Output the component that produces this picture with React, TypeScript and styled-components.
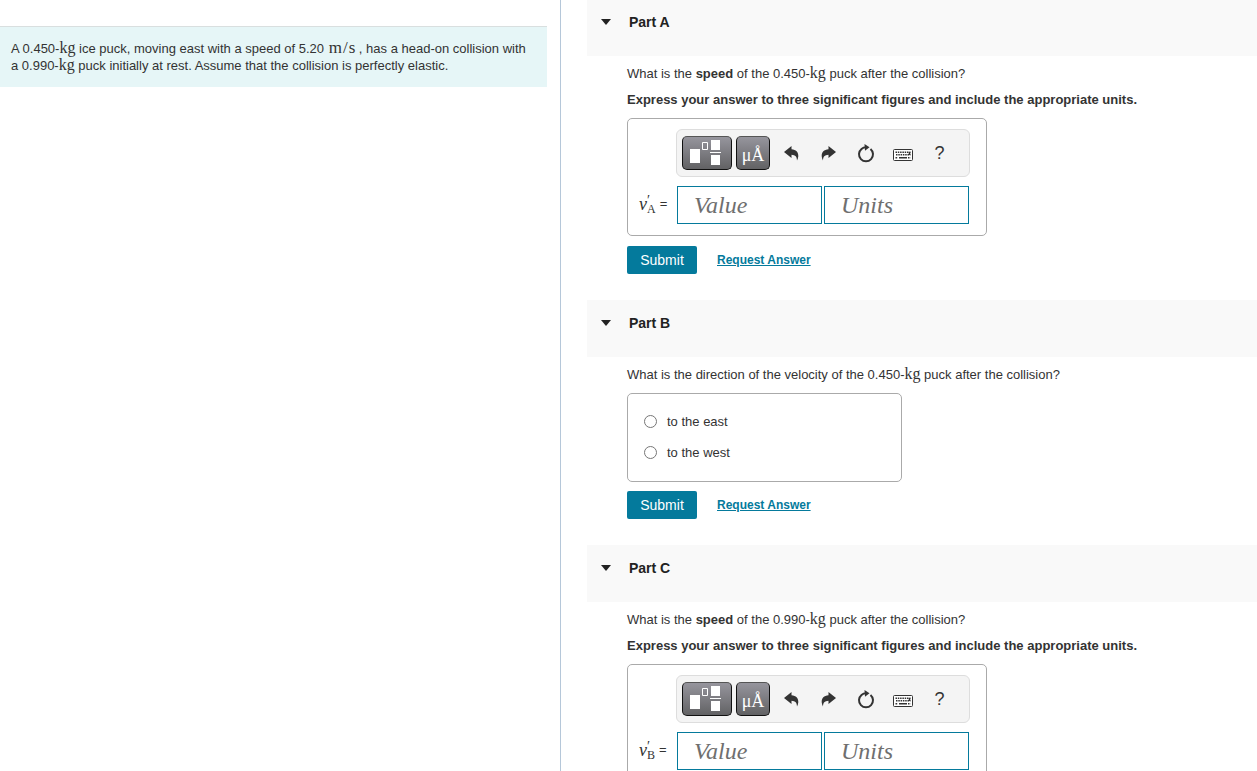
import React, { useState } from "react";
import styled, { createGlobalStyle } from "styled-components";

const sans = `"Liberation Sans", Arial, Helvetica, sans-serif`;
const serif = `"Liberation Serif", "Times New Roman", serif`;
const teal = "#047a9c";

const GlobalStyle = createGlobalStyle`
  *, *::before, *::after { box-sizing: border-box; }
  body { margin: 0; background: #fff; color: #333; font: 13px/16px ${sans}; }
  button, input { font-family: inherit; }
`;

const Page = styled.div`
  display: grid;
  grid-template-columns: 561fr 696fr;
  height: 100vh;
`;

const Pane = styled.div`
  min-width: 0;
  overflow-y: auto;
  scrollbar-width: none;
`;

const ProblemPane = styled(Pane)`
  padding: 26px 13px 0 0;
  border-right: 1px solid #b5c7d9;
`;

const PartsPane = styled(Pane)`
  padding-left: 26px;
`;

const Problem = styled.p`
  margin: 0;
  padding: 13px 11px;
  border-top: 1px solid #d9dfdf;
  background: #e6f6f7;
  line-height: 17px;
`;

const UnitText = styled.span`
  font: 16px/14px ${serif};
`;

const SpeedUnit = styled(UnitText)`
  margin-left: 1px;
  font-size: 17px;
`;

const Slash = styled.span`
  margin: 0 1px;
`;

const PartList = styled.main`
  margin-top: -1px;
`;

const PartHeader = styled.h2`
  display: flex;
  height: 57px;
  margin: 0;
  background: #f9f9f9;
`;

const PartToggle = styled.button`
  display: flex;
  align-items: center;
  gap: 18px;
  height: 46px;
  padding: 0 14px;
  border: 0;
  background: none;
  color: #222;
  font-size: 14px;
  font-weight: bold;
  cursor: pointer;
`;

const Caret = styled.span<{ $open: boolean }>`
  border: 5px solid transparent;
  border-top: 6px solid #222;
  border-bottom: 0;
  transform: ${(p) => (p.$open ? "none" : "rotate(-90deg)")};
`;

const PartBody = styled.div`
  padding: 10px 40px 26px;
`;

const Question = styled.p`
  margin: 0;
`;

const Instruction = styled.p`
  margin: 10px 0 0;
  font-weight: bold;
`;

const AnswerBox = styled.div`
  width: 360px;
  max-width: 100%;
  margin: 10px 0;
  padding: 10px 16px 11px 11px;
  border: 1px solid #aaa;
  border-radius: 5px;
`;

const Toolbar = styled.div`
  display: flex;
  align-items: center;
  height: 48px;
  margin-left: 37px;
  padding-left: 5px;
  border: 1px solid #ddd;
  border-radius: 6px;
  background: #f4f4f4;
`;

const DarkButtons = styled.div`
  display: flex;
  gap: 4px;
  margin-right: 3px;
`;

const DarkButton = styled.button<{ $wide?: boolean }>`
  display: grid;
  place-items: center;
  width: ${(p) => (p.$wide ? 50 : 34)}px;
  height: 34px;
  padding: 0;
  border: 1px solid #111;
  border-top-color: #555;
  border-radius: 5px;
  background: linear-gradient(#96959d, #626264);
  color: #fff;
`;

const UnitsLabel = styled.span`
  padding-top: 4px;
  font: 18px/20px ${serif};
`;

const ToolButton = styled.button`
  display: grid;
  place-items: center;
  width: 37px;
  height: 34px;
  padding: 0;
  border: 0;
  background: none;
  color: #333;
  font-size: 18px;
`;

const Fields = styled.div`
  display: flex;
  align-items: center;
  gap: 2px;
  margin: 9px 1px 0 0;
`;

const Variable = styled.label`
  display: flex;
  align-items: center;
  width: 36px;
  padding-bottom: 2px;
  font: 14px/16px ${serif};
`;

const VarName = styled.i`
  font-size: 18px;
`;

const Marks = styled.span`
  display: flex;
  flex-direction: column;
  padding-top: 2px;
  margin-right: 4px;
  font-size: 12px;
  line-height: 9px;
`;

const Prime = styled.span`
  font-size: 14px;
`;

const Equals = styled.span`
  font-family: ${sans};
  font-size: 13px;
`;

const Field = styled.input`
  flex: 1;
  min-width: 0;
  height: 38px;
  padding: 0 16px;
  border: 1px solid ${teal};
  border-radius: 0;
  background: #fff;
  font: italic 24px ${serif};
  &::placeholder { color: #6f6f6f; opacity: 1; }
`;

const Choices = styled.fieldset`
  display: flex;
  flex-direction: column;
  gap: 15px;
  width: 275px;
  max-width: 100%;
  margin: 10px 0 9px;
  padding: 20px 16px;
  border: 1px solid #aaa;
  border-radius: 5px;
`;

const Choice = styled.label`
  display: flex;
  align-items: center;
  gap: 10px;
`;

const Radio = styled.input`
  width: 13px;
  height: 13px;
  margin: 0 0 2px;
`;

const Actions = styled.div`
  display: flex;
  align-items: center;
  gap: 20px;
`;

const Submit = styled.button`
  width: 70px;
  height: 28px;
  padding: 0;
  border: 0;
  border-radius: 2px;
  background: ${teal};
  color: #fff;
  font-size: 14px;
`;

const RequestLink = styled.a`
  color: ${teal};
  font-size: 12px;
  font-weight: bold;
`;

const TemplateIcon = () => (
  <svg width="34" height="28" viewBox="0 0 34 28" aria-hidden="true">
    <path fill="#fff" d="M0 10h10v14H0zM21 1h9v10h-9zM21 16h9v10h-9zM20 13h11v1H20z" />
    <path fill="none" stroke="#fff" d="M12.500 3.500h5v7h-5z" />
  </svg>
);

const ArrowShape = () => (
  <path
    fill="currentColor"
    d="M0 6 7.500 0v3.200c4.500.3 7 3 6.800 7-.1 1.500-.6 3-1.300 4.300-.1-3.700-1.500-5.500-5.500-5.700V12z"
  />
);

const UndoIcon = () => (
  <svg width="15" height="15" viewBox="0 0 15 15" aria-hidden="true">
    <ArrowShape />
  </svg>
);

const RedoIcon = () => (
  <svg width="15" height="15" viewBox="0 0 15 15" aria-hidden="true">
    <g transform="matrix(-1 0 0 1 15 0)">
      <ArrowShape />
    </g>
  </svg>
);

const ResetIcon = () => (
  <svg width="18" height="20" viewBox="0 0 18 20" aria-hidden="true">
    <path
      fill="none"
      stroke="currentColor"
      strokeWidth="2"
      d="M13.500 5.900A7 7 0 1 1 4.500 5.900Q6.500 4.200 9 4.200"
    />
    <path fill="currentColor" d="M7.500 1 12.500 4.300 8 7.800z" />
  </svg>
);

const KeyboardIcon = () => (
  <svg width="20" height="16" viewBox="0 0 20 16" aria-hidden="true">
    <rect x=".5" y="4.500" width="19" height="11" rx="1" fill="#fff" stroke="currentColor" />
    <path
      stroke="currentColor"
      strokeWidth="1.500"
      strokeDasharray="1.500 .8"
      d="M2.500 7.200h15M3 9.700h14.500M2.500 12.700h2.500M15 12.700h2.500"
    />
    <path stroke="currentColor" strokeWidth="1.500" d="M6 12.700h8M16.500 7v3" />
  </svg>
);

const Kg = () => <UnitText>kg</UnitText>;

function Part({ title, children }: { title: string; children: React.ReactNode }) {
  const [open, setOpen] = useState(true);
  return (
    <section>
      <PartHeader>
        <PartToggle type="button" aria-expanded={open} onClick={() => setOpen(!open)}>
          <Caret $open={open} />
          {title}
        </PartToggle>
      </PartHeader>
      {open && <PartBody>{children}</PartBody>}
    </section>
  );
}

function ValueAnswer({ id, subscript }: { id: string; subscript: string }) {
  return (
    <AnswerBox>
      <Toolbar role="toolbar" aria-label="Math tools">
        <DarkButtons>
          <DarkButton $wide type="button" aria-label="Templates">
            <TemplateIcon />
          </DarkButton>
          <DarkButton type="button">
            <UnitsLabel>μÅ</UnitsLabel>
          </DarkButton>
        </DarkButtons>
        <ToolButton type="button" aria-label="Undo"><UndoIcon /></ToolButton>
        <ToolButton type="button" aria-label="Redo"><RedoIcon /></ToolButton>
        <ToolButton type="button" aria-label="Reset"><ResetIcon /></ToolButton>
        <ToolButton type="button" aria-label="Keyboard"><KeyboardIcon /></ToolButton>
        <ToolButton type="button">?</ToolButton>
      </Toolbar>
      <Fields>
        <Variable htmlFor={id}>
          <VarName>v</VarName>
          <Marks>
            <Prime>′</Prime>
            <span>{subscript}</span>
          </Marks>
          <Equals>=</Equals>
        </Variable>
        <Field id={id} placeholder="Value" />
        <Field aria-label="Units" placeholder="Units" />
      </Fields>
    </AnswerBox>
  );
}

const AnswerActions = () => (
  <Actions>
    <Submit type="button">Submit</Submit>
    <RequestLink href="#request">Request Answer</RequestLink>
  </Actions>
);

export default function App() {
  return (
    <Page>
      <GlobalStyle />
      <ProblemPane>
        <Problem>
          A 0.450-<Kg /> ice puck, moving east with a speed of 5.20{" "}
          <SpeedUnit>m<Slash>/</Slash>s</SpeedUnit> , has a head-on collision with a 0.990-<Kg /> puck
          initially at rest. Assume that the collision is perfectly elastic.
        </Problem>
      </ProblemPane>
      <PartsPane>
        <PartList>
          <Part title="Part A">
            <Question>
              What is the <b>speed</b> of the 0.450-<Kg /> puck after the collision?
            </Question>
            <Instruction>
              Express your answer to three significant figures and include the appropriate units.
            </Instruction>
            <ValueAnswer id="speed-a" subscript="A" />
            <AnswerActions />
          </Part>
          <Part title="Part B">
            <Question>
              What is the direction of the velocity of the 0.450-<Kg /> puck after the collision?
            </Question>
            <Choices aria-label="Direction">
              <Choice><Radio type="radio" name="direction" />to the east</Choice>
              <Choice><Radio type="radio" name="direction" />to the west</Choice>
            </Choices>
            <AnswerActions />
          </Part>
          <Part title="Part C">
            <Question>
              What is the <b>speed</b> of the 0.990-<Kg /> puck after the collision?
            </Question>
            <Instruction>
              Express your answer to three significant figures and include the appropriate units.
            </Instruction>
            <ValueAnswer id="speed-c" subscript="B" />
          </Part>
        </PartList>
      </PartsPane>
    </Page>
  );
}
